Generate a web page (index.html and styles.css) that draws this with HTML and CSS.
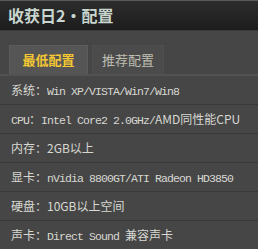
FILE: index.html
```html
<!DOCTYPE html>
<html lang="zh-CN">
<head>
  <meta charset="UTF-8" />
  <title>收获日2・配置</title>
  <link rel="stylesheet" href="styles.css">
</head>
<body>
  <div class="panel">
    <h1 class="titulo">收获日2・配置</h1>

    <div class="tabs">
      <span class="tab activo">最低配置</span>
      <span class="tab">推荐配置</span>
    </div>

    <ul class="specs">
      <li>系统：<span class="en">Win XP/VISTA/Win7/Win8</span></li>
      <li><span class="en">CPU</span>：<span class="en">Intel Core2 2.0GHz/</span>AMD同性能CPU</li>
      <li>内存：2GB以上</li>
      <li>显卡：<span class="en">nVidia 8800GT/ATI Radeon HD3850</span></li>
      <li>硬盘：10GB以上空间</li>
      <li>声卡：<span class="en">Direct Sound </span>兼容声卡</li>
    </ul>
  </div>
</body>
</html>
```

FILE: styles.css
```css
body {
  margin: 0;
  background: #464646;
  font-family: "Noto Sans CJK SC", sans-serif;
}

.panel {
  width: 258px;
  height: 249px;
  overflow: hidden;
  background: #464646;
}

.titulo {
  margin: 0;
  height: 29px;
  line-height: 29px;
  padding-left: 8px;
  font-size: 16px;
  font-weight: bold;
  color: #c9d6cf;
  background: linear-gradient(#2c2c2c, #1d1d1d);
  border-top: 1px solid #5a5a5a;
  border-bottom: 1px solid #3a3a3a;
}

.tabs {
  display: flex;
  gap: 4px;
  padding: 14px 0 0 9px;
  border-bottom: 2px solid #525252;
}

.tab {
  width: 70px;
  height: 28px;
  line-height: 28px;
  text-align: center;
  font-size: 13px;
  color: #bdbdb0;
  background: #4b4b4b;
  border: 1px solid #4f4f4f;
  border-bottom: none;
}

.tab.activo {
  width: 77px;
  color: #f5c832;
  font-weight: bold;
  background: #555555;
  border-color: #5c5c5c;
}

.specs {
  list-style: none;
  margin: 0;
  padding: 0;
}

.specs li {
  height: 28px;
  line-height: 28px;
  padding-left: 11px;
  font-size: 12px;
  color: #d8d8d2;
  white-space: nowrap;
  border-bottom: 1px solid #3a3a3a;
}

/* tramos latinos en letra monoespaciada estrecha */
.en {
  font-family: "Liberation Mono", monospace;
  font-size: 11.5px;
  letter-spacing: -0.9px;
}
```
